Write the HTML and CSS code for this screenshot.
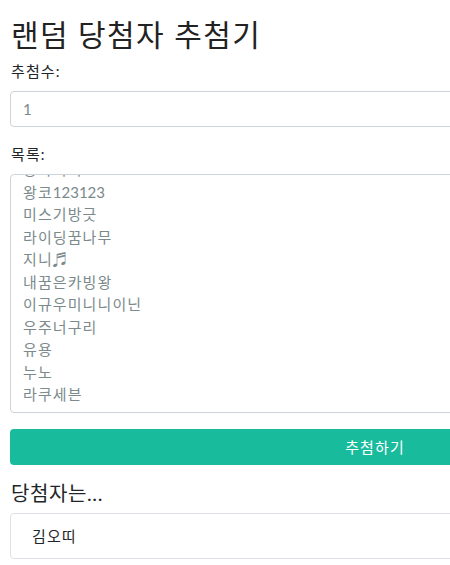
FILE: index.html
```html
<!DOCTYPE html>
<html lang="ko">
<head>
<meta charset="utf-8">
<title>랜덤 당첨자 추첨기</title>
<link rel="stylesheet" href="styles.css">
</head>
<body>
<div class="container">
  <h1 class="title">랜덤 당첨자 추첨기</h1>
  <div class="form-group">
    <label class="label">추첨수:</label>
    <div class="input">1</div>
  </div>
  <div class="form-group">
    <label class="label">목록:</label>
    <div class="textarea">
      <div class="lines">
        <div>김오띠</div>
        <div>황아이디</div>
        <div>왕코<span class="num">123123</span></div>
        <div>미스기방긋</div>
        <div>라이딩꿈나무</div>
        <div>지니♬</div>
        <div>내꿈은카빙왕</div>
        <div>이규우미니니이닌</div>
        <div>우주너구리</div>
        <div>유용</div>
        <div>누노</div>
        <div>라쿠세븐</div>
      </div>
    </div>
  </div>
  <button class="btn">추첨하기</button>
  <h4 class="result-title">당첨자는...</h4>
  <div class="result">김오띠</div>
</div>
</body>
</html>
```
FILE: styles.css
```css
html, body {
  margin: 0;
  padding: 0;
  overflow: hidden;
  background: #fff;
}
body {
  font-family: Lato, "Noto Sans CJK KR", sans-serif;
  font-size: 15px;
  line-height: 1.5;
  color: #212529;
  letter-spacing: 1.1px;
}
.container {
  width: 730px;
  padding: 16px 0 0 10px;
}
.title {
  margin: 0 0 8px 0;
  font-size: 30px;
  font-weight: 400;
  line-height: 1.2;
  color: #222;
  padding-left: 1px;
  letter-spacing: 1.4px;
}
.form-group {
  margin-bottom: 16px;
}
.label {
  display: block;
  margin-bottom: 8px;
  padding-left: 1px;
}
.input {
  border: 1px solid #ced4da;
  border-radius: 4px;
  padding: 6px 12px;
  color: #7b8a8b;
  height: 22.5px;
  letter-spacing: 0;
}
.textarea {
  border: 1px solid #ced4da;
  border-radius: 4px;
  padding: 6px 12px;
  color: #7b8a8b;
  height: 225px;
  overflow: hidden;
  display: flex;
  flex-direction: column;
  justify-content: flex-end;
}
.lines {
  flex-shrink: 0;
}
.num {
  letter-spacing: 0;
}
.btn {
  display: block;
  width: 100%;
  height: 36px;
  border: 0;
  border-radius: 4px;
  background: #18bc9c;
  color: #fff;
  font-family: inherit;
  font-size: 15px;
  letter-spacing: 1.1px;
  margin: 0 0 16px 0;
  padding: 0;
}
.result-title {
  margin: 0 0 8px 0;
  font-size: 20px;
  font-weight: 400;
  line-height: 1.2;
  padding-left: 1px;
  letter-spacing: 0.6px;
}
.result {
  border: 1px solid #dee2e6;
  border-radius: 4px;
  padding: 11px 21px;
  color: #212529;
}
```
